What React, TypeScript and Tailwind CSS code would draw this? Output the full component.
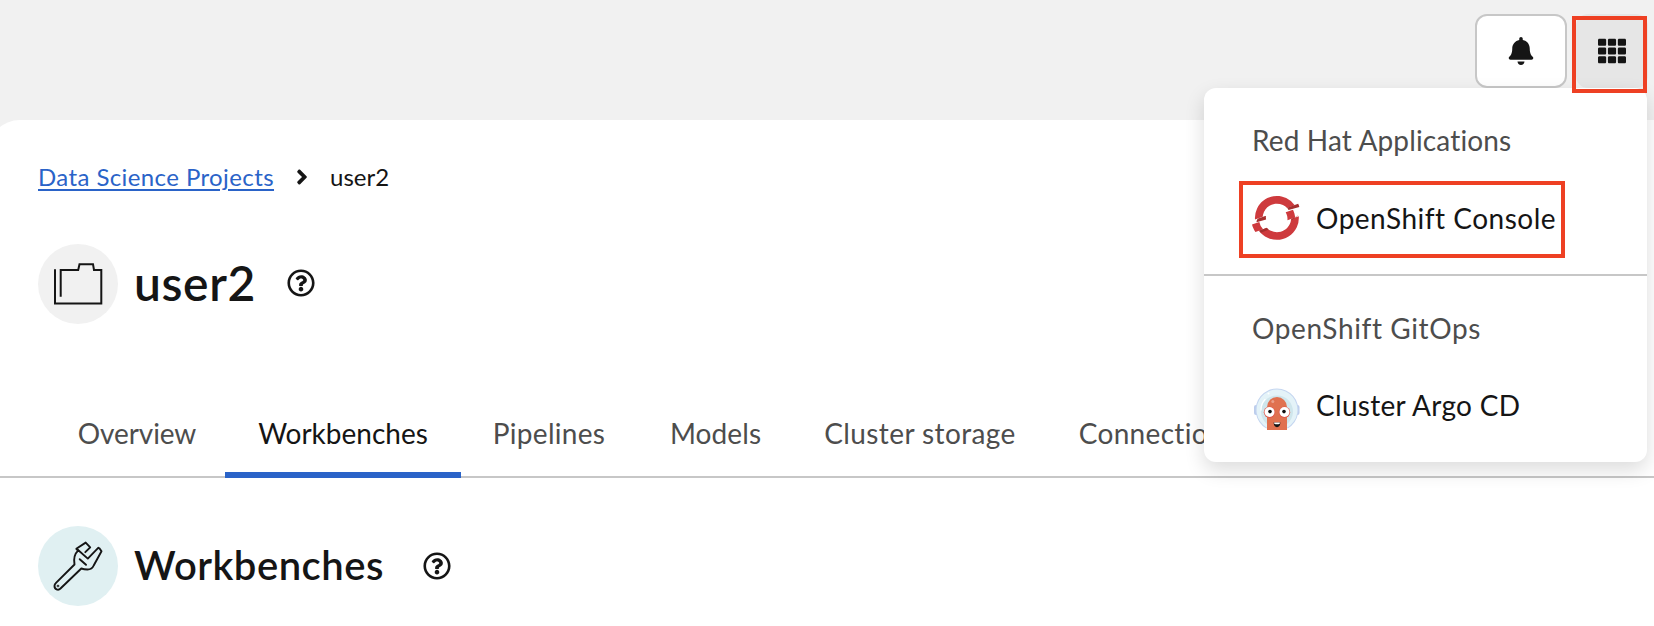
import React from "react";
import { FaAngleRight, FaBell, FaRegQuestionCircle, FaTh } from "react-icons/fa";

function OpenShiftLogo() {
  return (
    <svg viewBox="0 0 64 64" className="size-[51px] shrink-0">
      <g fill="#ce3a3d">
        <path d="M38.802 13.776c2.004.935 3.74 2.21 5.204 3.707l9.633-3.506a27.38 27.38 0 0 0-10.756-8.95c-13.77-6.42-30.198-.442-36.62 13.326a27.38 27.38 0 0 0-2.488 13.771l9.634-3.505c.16-2.087.67-4.18 1.603-6.184 4.173-8.947 14.844-12.83 23.79-8.658" />
        <path d="M9.153 35.01L0 38.342c.84 3.337 2.3 6.508 4.304 9.33l9.612-3.5a17.99 17.99 0 0 1-4.763-9.164" />
        <path d="M49.074 31.38a17.64 17.64 0 0 1-1.616 6.186c-4.173 8.947-14.843 12.83-23.79 8.657a17.71 17.71 0 0 1-5.215-3.7l-9.612 3.5c2.662 3.744 6.293 6.874 10.748 8.953 13.77 6.42 30.196.44 36.618-13.328a27.28 27.28 0 0 0 2.479-13.765l-9.61 3.498z" />
        <path d="M51.445 19.618l-9.153 3.332c1.7 3.046 2.503 6.553 2.24 10.08l9.612-3.497c-.275-3.45-1.195-6.817-2.7-9.915" />
      </g>
      <g fill="#a5302f">
        <path d="M17.424 27.158L7.8 30.664c-1.2.6-2 2.2-2.2 4.9l12.1-3.67c-.297-1.547-.403-3.142-.28-4.74" />
        <path d="M59.4 16.2c-.3-1.5-.8-2.8-1.5-4l-13.9 5.2c.6 1 1.3 1.6 1.9 2.6z" />
        <path d="M58.6 26l-5.6 3.7-3.9 1.7 1.3 1.1z" />
        <path d="M8.8 46l9.6-3.5 2.6 2.2-9.8 3.9z" />
      </g>
    </svg>
  );
}

function ArgoLogo() {
  return (
    <svg viewBox="0 0 46 46" className="mt-[6px] size-[46px] shrink-0">
      <rect x="0" y="18" width="45.5" height="10" rx="2" fill="#bccdec" />
      <path d="M12 41.2a21.4 21.4 0 1 1 22 0z" fill="#c5d6f0" />
      <path d="M12.5 40.4a20.4 20.4 0 1 1 21 0z" fill="#e4f3f8" />
      <path d="M13 37a16 16 0 1 1 20 0z" fill="#cfe6ec" />
      <path d="M13 43V20a10 10 0 0 1 20 0v23z" fill="#e0714f" />
      <circle cx="18.8" cy="14.5" r="1.5" fill="#eba08a" />
      <circle cx="15.5" cy="25.3" r="5.7" fill="#dd5a4c" />
      <circle cx="30.5" cy="25.3" r="5.7" fill="#dd5a4c" />
      <circle cx="15.5" cy="25" r="5" fill="#fff" />
      <circle cx="30.5" cy="25" r="5" fill="#fff" />
      <circle cx="16" cy="24.6" r="1.8" fill="#111" />
      <circle cx="30" cy="24.6" r="1.8" fill="#111" />
      <path d="M19.6 35.6h6.8c-.2 3-1.4 4.6-3.4 4.6s-3.2-1.6-3.4-4.6z" fill="#151515" />
      <path d="M20.2 35.4h5.6v1.3q-2.8 1-5.6 0z" fill="#fff" />
      <path d="M7 23c0-4 1.5-8 4-10.5" stroke="#fff" strokeWidth="1.3" fill="none" strokeLinecap="round" />
      <circle cx="14.5" cy="6.500" r="1" fill="#fff" />
    </svg>
  );
}

function ProjectIcon() {
  return (
    <div className="size-20 shrink-0 rounded-full bg-[#f1f1f1]">
      <svg viewBox="0 0 80 80" className="size-20" fill="none" stroke="#151515" strokeWidth="2">
        <path d="M22.7 52.7V26H40.2L41.5 20.2H55L56 26h7.3v33.4H17V25.3" />
      </svg>
    </div>
  );
}

function WrenchIcon() {
  return (
    <div className="size-20 shrink-0 rounded-full bg-[#e0f0f2]">
      <svg
        viewBox="0 0 80 80"
        className="size-20"
        fill="none"
        stroke="#151515"
        strokeWidth="1.9"
        strokeLinejoin="round"
        strokeLinecap="round"
      >
        <path d="M39.5 23.5 49.8 32.6 60.2 21.8Q61.5 22 63.5 25.2L55.7 39.5Q54 43.5 49.5 43.5 46 43.5 43.3 42.5L22.5 62.5C20 65 16.3 63 16.5 59.8Q16.5 58.3 18 56.8L36.5 38.5C35.5 33 36.5 28 40 24.6" />
        <path d="M40.5 25 38.3 22.8 47.7 16.6 52.2 21.3 47.3 26.2" />
        <path d="M41.7 33.2 48 38.8" />
        <circle cx="20" cy="60" r=".4" />
      </svg>
    </div>
  );
}

const tabs = [
  { label: "Overview", box: "ml-[49px] w-[176px] tracking-[-0.1px]", active: false },
  { label: "Workbenches", box: "w-[236px]", active: true },
  { label: "Pipelines", box: "w-[176px] tracking-[0.3px]", active: false },
  { label: "Models", box: "w-[157px] tracking-[0.1px]", active: false },
  { label: "Cluster storage", box: "w-[252px] tracking-[0.4px]", active: false },
  { label: "Connections", box: "w-[223px] tracking-[0.3px]", active: false },
];

export default function App() {
  return (
    <div className="relative h-[626px] w-[1654px] overflow-hidden bg-[#f1f1f1] font-['Lato','Open_Sans',sans-serif] text-[28px] text-[#151515] [font-variant-ligatures:none]">
      <header className="flex h-[120px] items-start justify-end gap-[9px] pt-[14px] pr-[6px]">
        <button className="flex h-[74px] w-[92px] items-center justify-center rounded-xl border-2 border-[#c7c7c7] bg-white">
          <FaBell className="size-7" />
        </button>
        <button className="flex h-[74px] w-[72px] items-center justify-center rounded-xl bg-[#e6e6e6]">
          <FaTh className="size-7" />
        </button>
      </header>

      <main className="-ml-3 h-[506px] rounded-tl-[32px] bg-white pl-3">
        <nav className="flex h-[114px] items-center pl-[38px] text-[24px]">
          <a className="tracking-[0.4px] text-[#2a63c8] underline decoration-2 underline-offset-[3px]">
            Data Science Projects
          </a>
          <FaAngleRight className="ml-[16px] size-6" />
          <span className="ml-[16px]">user2</span>
        </nav>
        <div className="mt-[10px] flex h-20 items-center pl-[38px]">
          <ProjectIcon />
          <h1 className="ml-4 pb-[3px] text-[48px] font-semibold tracking-[0.6px]">user2</h1>
          <FaRegQuestionCircle className="mb-0.5 ml-[31px] size-7" />
        </div>
        <div className="mt-[62px] flex h-[92px] items-stretch border-b-2 border-[#c7c7c7] text-[#4d4d4d]">
          {tabs.map((t) => (
            <div
              key={t.label}
              className={`${t.box} -mb-0.5 flex shrink-0 items-center justify-center border-b-[6px] pt-[7px] ${
                t.active ? "border-[#2a63c8] text-[#151515]" : "border-transparent"
              }`}
            >
              <span className="whitespace-nowrap">{t.label}</span>
            </div>
          ))}
        </div>
        <div className="mt-[48px] flex h-20 items-center pl-[38px]">
          <WrenchIcon />
          <h2 className="ml-4 pb-[3px] text-[40px] font-semibold tracking-[0.5px]">Workbenches</h2>
          <FaRegQuestionCircle className="ml-[39px] size-7" />
        </div>
      </main>

      <div className="absolute top-[88px] left-[1204px] h-[374px] w-[443px] rounded-xl bg-white shadow-[0_8px_20px_rgba(0,0,0,0.14)]">
        <div className="flex h-[106px] items-center pb-0.5 pl-12 tracking-[0.15px] text-[#4d4d4d]">
          Red Hat Applications
        </div>
        <div className="-mt-[13px] ml-[35px] flex h-[77px] w-[326px] items-center border-4 border-[#ee4023] pl-[9px]">
          <OpenShiftLogo />
          <span className="ml-[13px] pb-1 tracking-[0.5px] whitespace-nowrap">OpenShift Console</span>
        </div>
        <div className="mt-4 h-0.5 bg-[#c7c7c7]" />
        <div className="flex h-[106px] items-center pb-0.5 pl-12 tracking-[0.6px] text-[#4d4d4d]">OpenShift GitOps</div>
        <div className="flex h-[50px] items-center pl-[50px]">
          <ArgoLogo />
          <span className="ml-4 pb-1 tracking-[0.3px]">Cluster Argo CD</span>
        </div>
      </div>
      <div className="absolute top-4 left-[1572px] h-[77px] w-[75px] border-4 border-[#ee4023]" />
    </div>
  );
}
